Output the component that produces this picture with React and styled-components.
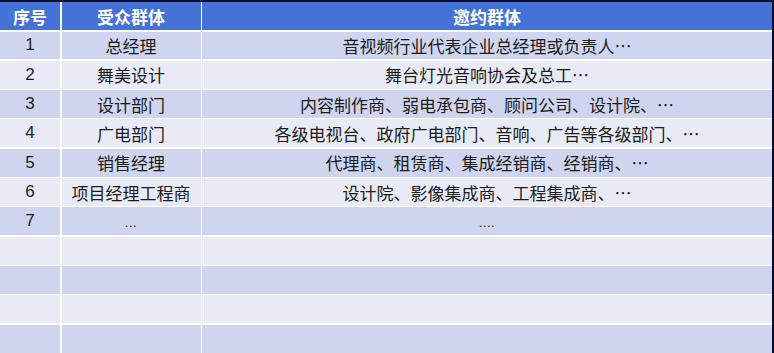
import styled, { createGlobalStyle } from 'styled-components'

const GlobalStyle = createGlobalStyle`
  html, body {
    margin: 0;
    padding: 0;
    background: #0b0b2e;
    overflow: hidden;
  }
`

const Frame = styled.div`
  width: 774px;
  height: 353px;
  box-sizing: border-box;
  padding: 2px 2px 0 0;
  background: #0b0b2e;
  overflow: hidden;
`

const Table = styled.div`
  display: grid;
  grid-template-columns: 60px 139px 1fr;
  grid-auto-rows: 27.83px;
  grid-template-rows: 28px;
  gap: 1.5px;
  background: #ffffff;
  height: 360px;
  font-family: "Liberation Sans", "Noto Sans CJK SC", sans-serif;
`

const HeadCell = styled.div`
  display: flex;
  align-items: center;
  justify-content: center;
  background: #4472d6;
  color: #ffffff;
  font-weight: bold;
  font-size: 17px;
`

const Cell = styled.div`
  display: flex;
  align-items: center;
  justify-content: center;
  background: ${p => (p.$odd ? '#cfd5ef' : '#e8ebf6')};
  color: #1c1c1c;
  font-size: 17px;
  white-space: nowrap;
`

const Ellipsis = styled.span`
  font-family: "Noto Sans CJK SC", sans-serif;
`

const Dots = styled.span`
  font-size: 13px;
  letter-spacing: 0.5px;
  padding-top: 3px;
`

const Text = ({ children }) => {
  const parts = children.split('…')
  return (
    <span>
      {parts[0]}
      {parts.length > 1 && <Ellipsis>…</Ellipsis>}
    </span>
  )
}

const rows = [
  ['1', '总经理', '音视频行业代表企业总经理或负责人…'],
  ['2', '舞美设计', '舞台灯光音响协会及总工…'],
  ['3', '设计部门', '内容制作商、弱电承包商、顾问公司、设计院、…'],
  ['4', '广电部门', '各级电视台、政府广电部门、音响、广告等各级部门、…'],
  ['5', '销售经理', '代理商、租赁商、集成经销商、经销商、…'],
  ['6', '项目经理工程商', '设计院、影像集成商、工程集成商、…'],
  ['7', <Dots key="a">...</Dots>, <Dots key="b">....</Dots>],
  ['', '', ''],
  ['', '', ''],
  ['', '', ''],
  ['', '', ''],
]

export default function App() {
  return (
    <>
      <GlobalStyle />
      <Frame>
        <Table>
          <HeadCell>序号</HeadCell>
          <HeadCell>受众群体</HeadCell>
          <HeadCell>邀约群体</HeadCell>
          {rows.map((r, i) =>
            r.map((c, j) => (
              <Cell key={`${i}-${j}`} $odd={i % 2 === 0}>
                {typeof c === 'string' ? <Text>{c}</Text> : c}
              </Cell>
            ))
          )}
        </Table>
      </Frame>
    </>
  )
}
